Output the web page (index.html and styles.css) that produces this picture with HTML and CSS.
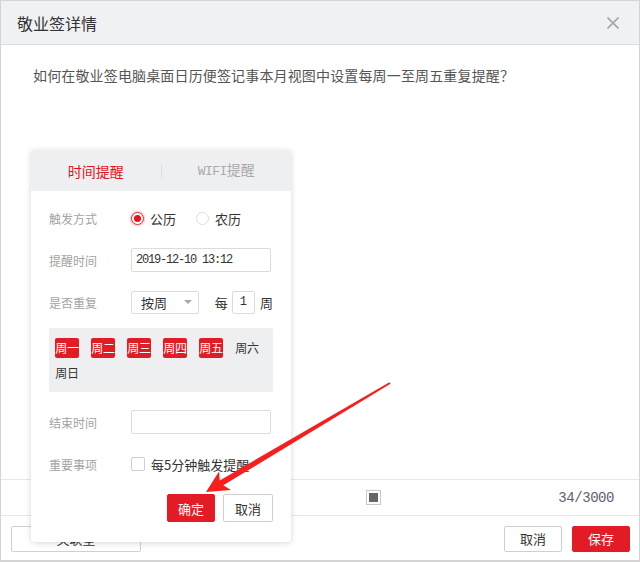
FILE: index.html
```html
<!DOCTYPE html>
<html lang="zh-CN">
<head>
<meta charset="utf-8">
<title>敬业签详情</title>
<link rel="stylesheet" href="styles.css">
</head>
<body>
<div class="dialog">
  <div class="header">
    <div class="title">敬业签详情</div>
    <svg class="close" width="12" height="12" viewBox="0 0 12 12"><path d="M0.5 0.5 L11.5 11.5 M11.5 0.5 L0.5 11.5" stroke="#a6a6a6" stroke-width="1.6" fill="none"/></svg>
  </div>
  <div class="content">
    <p class="question">如何在敬业签电脑桌面日历便签记事本月视图中设置每周一至周五重复提醒？</p>
  </div>
  <div class="toolbar">
    <span class="stop-icon"><span class="stop-inner"></span></span>
    <span class="count">34/3000</span>
  </div>
  <div class="footer">
    <button class="btn btn-wide">关联星</button>
    <div class="footer-right">
      <button class="btn btn-plain">取消</button>
      <button class="btn btn-red">保存</button>
    </div>
  </div>

  <div class="popup">
    <div class="tabs">
      <div class="tab tab-active">时间提醒</div>
      <div class="tab-divider"></div>
      <div class="tab"><span class="mono">WIFI</span>提醒</div>
    </div>
    <div class="form">
      <div class="row">
        <span class="label">触发方式</span>
        <span class="radio radio-on"></span><span class="opt">公历</span>
        <span class="radio radio-off"></span><span class="opt">农历</span>
      </div>
      <div class="row">
        <span class="label">提醒时间</span>
        <span class="input date">2019-12-10 13:12</span>
      </div>
      <div class="row">
        <span class="label">是否重复</span>
        <span class="select">按周<span class="caret"></span></span>
        <span class="every">每</span>
        <span class="num">1</span>
        <span class="unit">周</span>
      </div>
      <div class="days">
        <span class="day on">周一</span>
        <span class="day on">周二</span>
        <span class="day on">周三</span>
        <span class="day on">周四</span>
        <span class="day on">周五</span>
        <span class="day">周六</span>
        <span class="day">周日</span>
      </div>
      <div class="row row-end">
        <span class="label">结束时间</span>
        <span class="input"></span>
      </div>
      <div class="row">
        <span class="label">重要事项</span>
        <span class="checkbox"></span><span class="check-text">每5分钟触发提醒</span>
      </div>
      <div class="actions">
        <button class="pbtn pbtn-red">确定</button>
        <button class="pbtn pbtn-plain">取消</button>
      </div>
    </div>
  </div>

  <svg class="arrow" width="640" height="562" viewBox="0 0 640 562">
    <polygon fill="#f71e1e" points="206,492 231,490 223.3,485.3 390.5,383.8 389.5,382.2 219.8,480.4 219,471.5"/>
  </svg>
</div>
</body>
</html>
```
FILE: styles.css
```css
* { box-sizing: border-box; }
html, body { margin: 0; padding: 0; background: #fff; }
body {
  font-family: "Noto Sans CJK SC", "Liberation Sans", sans-serif;
  color: #333;
}
.dialog {
  position: relative;
  width: 640px;
  height: 562px;
  border: 1px solid #d4d4d4;
  border-bottom-width: 2px;
  display: flex;
  flex-direction: column;
  overflow: hidden;
}
.header {
  height: 44px;
  flex: none;
  background: #f0f1f3;
  border-bottom: 1px solid #dcdcdc;
  display: flex;
  align-items: center;
  justify-content: space-between;
  padding: 0 20px 0 16px;
}
.title { font-size: 16px; color: #333; line-height: 20px; }
.close { display: block; }
.content { flex: 1; padding: 20px 32px 0; }
.question {
  margin: 0;
  font-size: 14px;
  line-height: 20px;
  color: #555;
  letter-spacing: 0.15px;
}
.toolbar {
  flex: none;
  height: 37px;
  border-top: 1px solid #e8e8e8;
  border-bottom: 1px solid #e8e8e8;
  display: flex;
  align-items: center;
  padding: 0 25px 0 365px;
}
.stop-icon {
  width: 15px;
  height: 15px;
  border: 1px solid #c8c8c8;
  display: flex;
  align-items: center;
  justify-content: center;
}
.stop-inner { width: 9px; height: 9px; background: #666; }
.count {
  margin-left: auto;
  font-family: "Liberation Mono", monospace;
  font-size: 14px;
  letter-spacing: -0.45px;
  color: #5c6272;
}
.footer {
  flex: none;
  height: 44px;
  display: flex;
  align-items: flex-start;
  justify-content: space-between;
  padding: 10px 9px 0 10px;
}
.footer-right { display: flex; gap: 10px; }
.btn {
  font-family: inherit;
  height: 26px;
  font-size: 13px;
  border-radius: 2px;
  padding: 0;
  line-height: 24px;
  cursor: pointer;
}
.btn-wide { width: 130px; background: #fff; border: 1px solid #d0d0d0; color: #333; }
.btn-plain { width: 58px; background: #fff; border: 1px solid #cfcfcf; color: #333; }
.btn-red { width: 58px; background: #e31b25; border: 1px solid #e31b25; color: #fff; }

/* popup */
.popup {
  position: absolute;
  left: 30px;
  top: 149px;
  width: 260px;
  height: 392px;
  background: #fff;
  border-radius: 4px;
  box-shadow: 0 1px 6px rgba(0,0,0,0.16);
  overflow: hidden;
}
.tabs {
  height: 41px;
  background: #eeeff1;
  display: flex;
  align-items: center;
}
.tab {
  flex: 1;
  text-align: center;
  font-size: 14px;
  color: #aaa;
  line-height: 20px;
}
.tab-active { color: #e3141c; }
.mono { font-family: "Liberation Mono", monospace; font-size: 13px; letter-spacing: -0.6px; }
.tab-divider { width: 1px; height: 12px; background: #dcdcdc; }
.form { padding: 6px 18px 0; }
.row {
  height: 42px;
  display: flex;
  align-items: center;
}
.label {
  width: 82px;
  flex: none;
  font-size: 12px;
  color: #a3a3a3;
}
.radio {
  width: 13px;
  height: 13px;
  border-radius: 50%;
  flex: none;
  display: flex;
  align-items: center;
  justify-content: center;
}
.radio-on {
  border: 1px solid #e8242c;
  box-shadow: 0 0 0 1.5px rgba(232,36,44,0.18);
}
.radio-on::after {
  content: "";
  width: 7px;
  height: 7px;
  border-radius: 50%;
  background: #e3141c;
}
.radio-off { border: 1px solid #dedede; margin-left: 20px; }
.opt { font-size: 13px; color: #333; margin-left: 6px; }
.input {
  width: 140px;
  height: 24px;
  border: 1px solid #dcdcdc;
  border-radius: 2px;
  display: flex;
  align-items: center;
  padding-left: 4px;
}
.date {
  font-family: "Liberation Mono", monospace;
  font-size: 12px;
  letter-spacing: -1.2px;
  color: #333;
}
.select {
  width: 70px;
  height: 23px;
  border: 1px solid #dcdcdc;
  border-radius: 2px;
  display: flex;
  align-items: center;
  padding-left: 9px;
  font-size: 13px;
  color: #333;
  position: relative;
}
.caret {
  margin-left: auto;
  margin-right: 6px;
  width: 0;
  height: 0;
  border-left: 4px solid transparent;
  border-right: 4px solid transparent;
  border-top: 4px solid #a8a8a8;
}
.every { margin-left: 16px; font-size: 13px; }
.num {
  margin-left: 4px;
  width: 24px;
  height: 23px;
  border: 1px solid #dcdcdc;
  border-radius: 2px;
  display: flex;
  align-items: center;
  justify-content: center;
  font-family: "Liberation Mono", monospace;
  font-size: 12px;
}
.unit { margin-left: 5px; font-size: 13px; }
.days {
  margin-top: 5px;
  background: #eeeff1;
  border-radius: 2px;
  height: 64px;
  padding: 10px 6px 0;
  display: flex;
  flex-wrap: wrap;
  column-gap: 12px;
  row-gap: 5px;
  align-content: flex-start;
}
.day {
  width: 24px;
  height: 20px;
  font-size: 12px;
  line-height: 20px;
  text-align: center;
  color: #333;
  border-radius: 2px;
  white-space: nowrap;
  letter-spacing: -0.3px;
}
.day.on { background: #e31b25; color: #fff; }
.row-end { margin-top: 9px; }
.checkbox {
  width: 14px;
  height: 14px;
  border: 1px solid #cfcfcf;
  border-radius: 2px;
  flex: none;
}
.check-text { margin-left: 6px; font-size: 13px; color: #333; }
.actions {
  margin-top: 9px;
  display: flex;
  justify-content: flex-end;
  gap: 8px;
}
.pbtn {
  height: 28px;
  font-family: inherit;
  font-size: 13px;
  padding: 0;
  border-radius: 2px;
  cursor: pointer;
}
.pbtn-red { width: 48px; background: #e31b25; border: 1px solid #e31b25; color: #fff; }
.pbtn-plain { width: 50px; background: #fff; border: 1px solid #cfcfcf; color: #333; }
.arrow {
  position: absolute;
  left: -1px;
  top: -1px;
  pointer-events: none;
}
```
